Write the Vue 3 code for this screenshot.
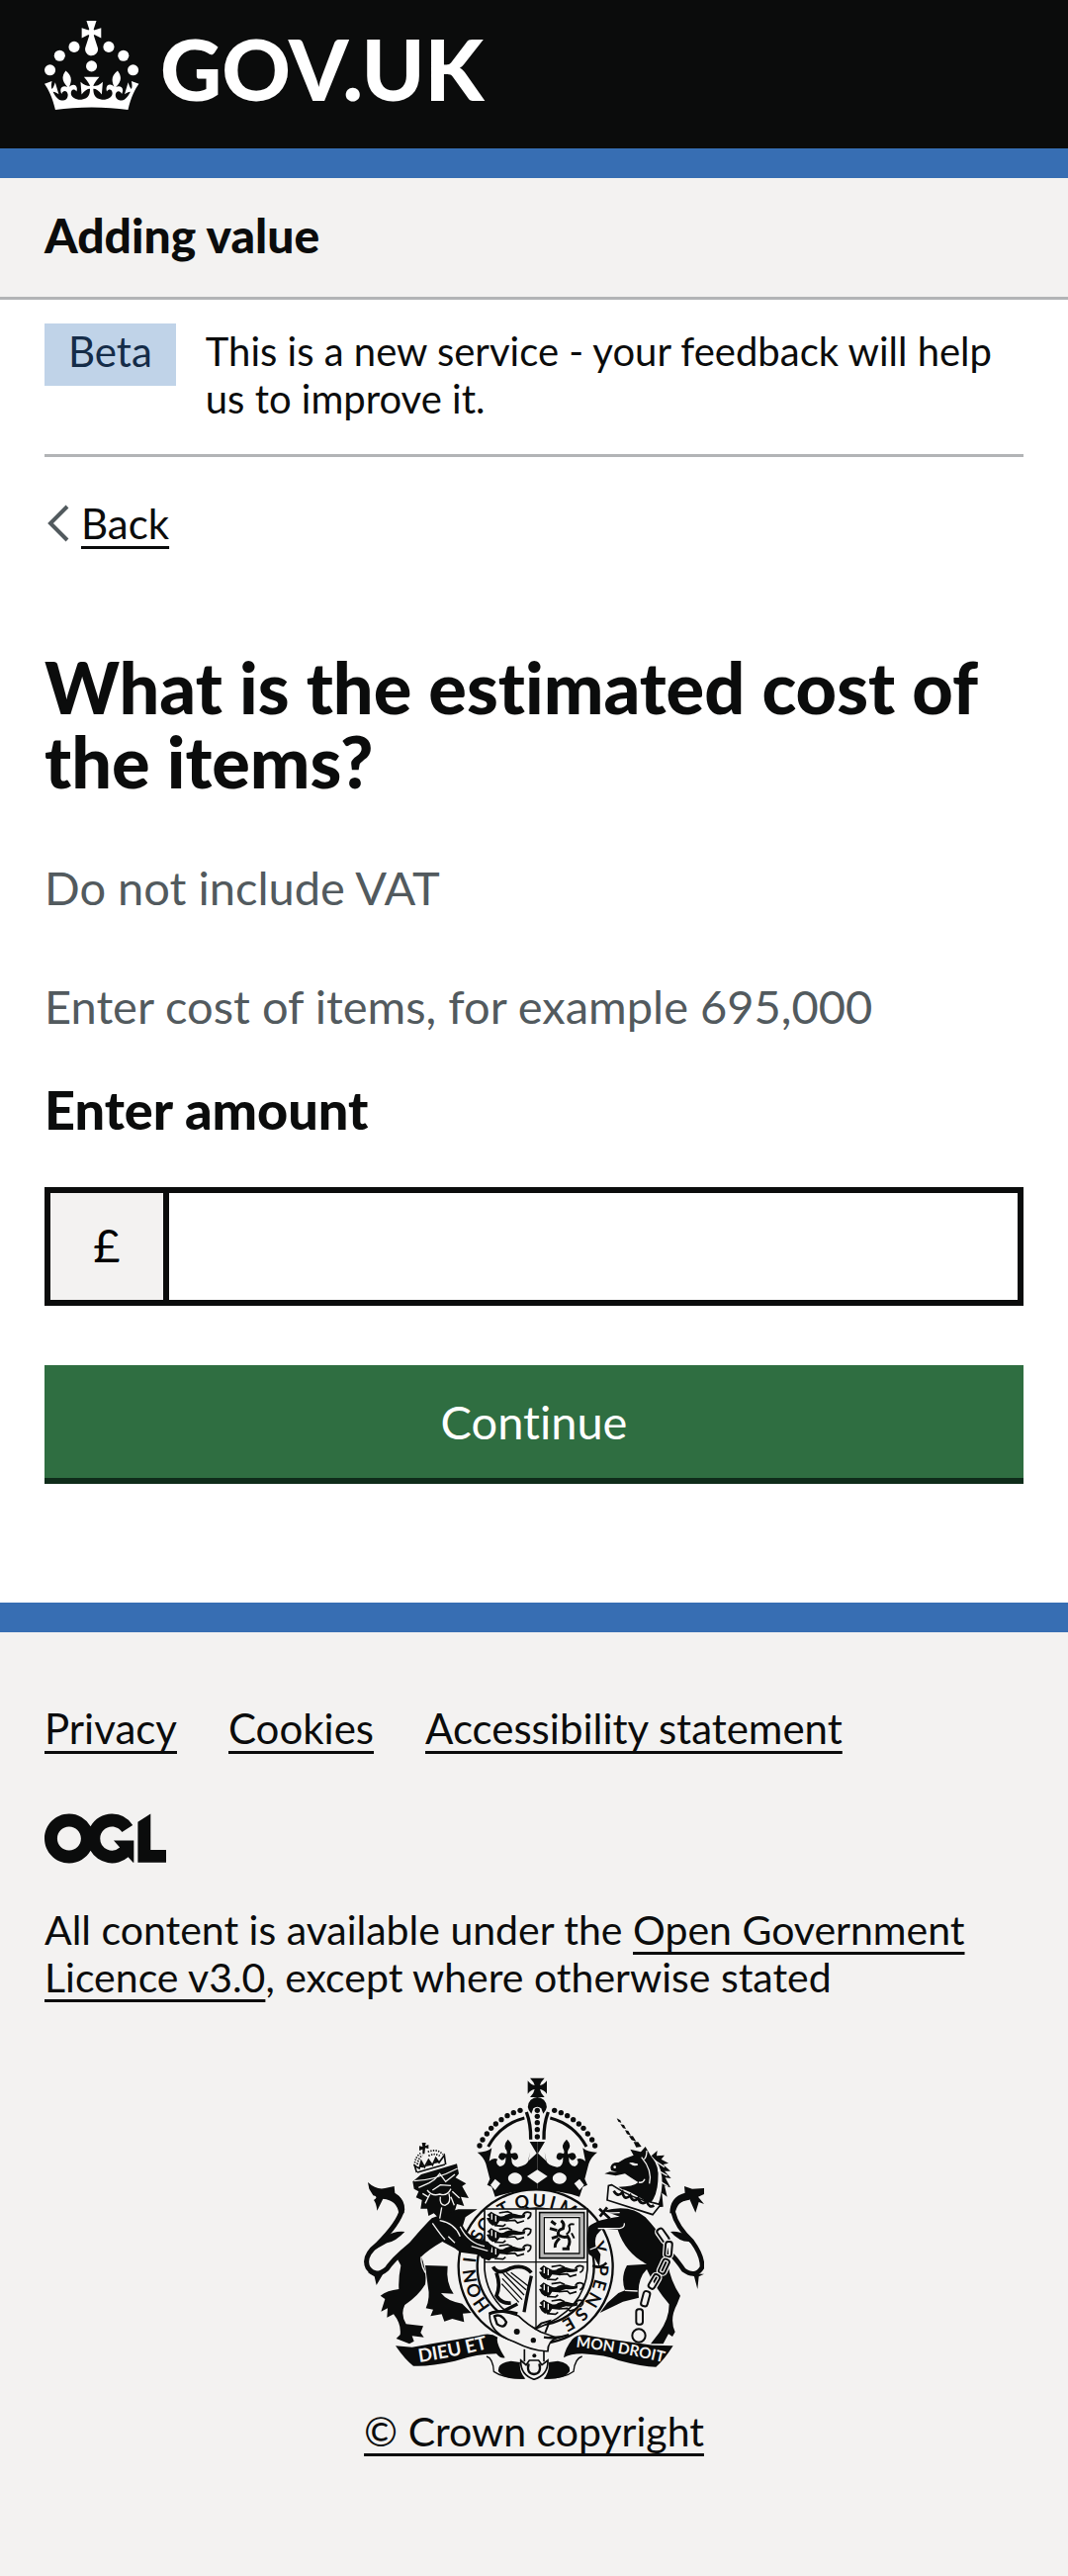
<script setup>
import { ref } from 'vue'

const amount = ref('')

const footerLinks = ['Privacy', 'Cookies', 'Accessibility statement']

// Pearls along the left half of the crown's arch, mirrored for the right half
const pearls = [
  [405, 265], [414, 247], [427, 229], [440, 212], [454, 199],
  [471, 186], [489, 174], [508, 165], [528, 158],
]

// Garter motto: letter and its angle clockwise from the top of the ring
const motto = [
  ['H', -125], ['O', -111], ['N', -98], ['I', -84], ['S', -62], ['O', -50],
  ['T', -29], ['Q', -12], ['U', 3], ['I', 15], ['M', 29],
  ['Y', 73], ['P', 93], ['E', 106], ['N', 120], ['S', 136], ['E', 150],
]

// Chain links: centre x, centre y, rotation
const chain = [
  [962, 538, -35], [978, 580, 5], [964, 632, 25], [934, 678, 30], [908, 730, 15], [890, 785, 0],
]

const passants = [
  [424, 465], [424, 515], [424, 565], [583, 628], [583, 680], [583, 732],
]
</script>

<template>
  <div class="page">
    <header>
      <div class="masthead">
        <a class="logo" href="#" aria-label="GOV.UK">
          <svg class="logo-crown" viewBox="0 0 64 60" aria-hidden="true">
            <circle cx="20" cy="17.6" r="3.7" />
            <circle cx="10.2" cy="23.5" r="3.7" />
            <circle cx="3.7" cy="33.2" r="3.7" />
            <circle cx="31.7" cy="30.6" r="3.7" />
            <circle cx="43.3" cy="17.6" r="3.7" />
            <circle cx="53.2" cy="23.5" r="3.7" />
            <circle cx="59.7" cy="33.2" r="3.7" />
            <path d="M33.1,9.8c.2-.1.3-.3.5-.5l4.6,2.4v-6.8l-4.6,1.5c-.1-.2-.3-.3-.5-.5l1.9-5.9h-6.7l1.9,5.9c-.2.1-.3.3-.5.5l-4.6-1.5v6.8l4.6-2.4c.1.2.3.3.5.5l-2.6,8c-.9,2.8,1.2,5.7,4.1,5.7h0c3,0,5.1-2.9,4.1-5.7l-2.6-8ZM37,37.9s-3.4,3.8-4.1,6.1c2.2,0,4.2-.5,6.4-2.8l-.7,8.5c-2-2.8-4.4-4.1-5.7-3.8.1,3.1.5,6.7,5.8,7.2,3.7.3,6.7-1.5,7-3.8.4-2.6-2-4.3-3.7-1.6-1.4-4.5,2.4-6.1,4.9-3.2-1.9-4.5-1.8-7.7,2.4-10.9,3,4,2.6,7.3-1.2,11.1,2.4-1.3,6.2,0,4,4.6-1.2-2.8-3.7-2.2-4.2.2-.3,1.7.7,3.7,3,4.2,1.9.3,4.7-.9,7-5.9-1.3,0-2.4.7-3.9,1.7l2.4-8c.6,2.3,1.4,3.7,2.2,4.5.6-1.6.5-2.8,0-5.3l5,1.8c-2.6,3.6-5.2,8.7-7.3,17.5-7.4-1.1-15.7-1.7-24.5-1.7h0c-8.8,0-17.1.6-24.5,1.7-2.1-8.9-4.7-13.9-7.3-17.5l5-1.8c-.5,2.5-.6,3.7,0,5.3.8-.8,1.6-2.3,2.2-4.5l2.4,8c-1.5-1-2.6-1.7-3.9-1.7,2.3,5,5.2,6.2,7,5.9,2.3-.4,3.3-2.4,3-4.2-.5-2.4-3-3.1-4.2-.2-2.2-4.6,1.6-6,4-4.6-3.7-3.7-4.2-7.1-1.2-11.1,4.2,3.2,4.3,6.4,2.4,10.9,2.5-2.8,6.3-1.3,4.9,3.2-1.8-2.7-4.1-1-3.7,1.6.3,2.3,3.3,4.1,7,3.8,5.4-.5,5.7-4.2,5.8-7.2-1.3-.2-3.7,1-5.7,3.8l-.7-8.5c2.2,2.3,4.2,2.7,6.4,2.8-.7-2.3-4.1-6.1-4.1-6.1h10.6,0Z" />
          </svg>
          <span class="logo-name">GOV.UK</span>
        </a>
      </div>
      <div class="service">Adding value</div>
    </header>

    <div class="container">
      <div class="phase">
        <strong class="tag">Beta</strong>
        <span class="phase-text">This is a new service - your feedback will help us to improve it.</span>
      </div>

      <a class="back" href="#">
        <svg class="chevron" viewBox="0 0 22 38" aria-hidden="true"><path d="M20 2 3 19l17 17" /></svg>
        <span class="underlined">Back</span>
      </a>

      <main>
        <form @submit.prevent>
          <h1>What is the estimated cost of the items?</h1>
          <p class="hint">Do not include VAT</p>
          <p id="amount-hint" class="hint">Enter cost of items, for example 695,000</p>
          <label for="amount">Enter amount</label>
          <div class="field">
            <span class="prefix" aria-hidden="true">£</span>
            <input id="amount" v-model="amount" type="text" inputmode="decimal" aria-describedby="amount-hint" />
          </div>
          <button type="submit">Continue</button>
        </form>
      </main>
    </div>

    <footer>
      <ul class="footer-links">
        <li v-for="link in footerLinks" :key="link"><a class="underlined" href="#">{{ link }}</a></li>
      </ul>
      <svg class="ogl" viewBox="0 0 483.2 195.7" aria-hidden="true">
        <path d="M421.5 142.8V.1l-50.7 32.3v161.1h112.4v-50.7zm-122.3-9.6A47.12 47.12 0 0 1 221 97.8c0-26 21.1-47.1 47.1-47.1 16.7 0 31.4 8.7 39.7 21.8l42.7-27.2A97.63 97.63 0 0 0 268.1 0c-36.5 0-68.3 20.1-85.1 49.7A98 98 0 0 0 97.8 0C43.9 0 0 43.9 0 97.8s43.9 97.8 97.8 97.8c36.5 0 68.3-20.1 85.1-49.7a97.76 97.76 0 0 0 149.6 25.4l19.4 22.2h3v-87.8h-80l24.3 27.5zM97.8 145c-26 0-47.1-21.1-47.1-47.1s21.1-47.1 47.1-47.1 47.1 21.1 47.1 47.1S123.8 145 97.8 145" />
      </svg>
      <p class="licence">
        All content is available under the
        <a class="underlined" href="#">Open Government Licence v3.0</a>, except where otherwise stated
      </p>

      <a class="copyright" href="#">
        <svg class="crest" viewBox="54 58 1032 918" aria-hidden="true">
          <defs>
            <g id="crown-half">
              <circle v-for="[x, y] in pearls" :key="x" :cx="x" :cy="y" r="8" />
              <path class="line" stroke-width="9" d="M431 268Q468 200 541 181" />
              <path class="line" stroke-width="10" d="M547 163Q561 200 560 246" />
              <path d="M398 285Q425 286 442 272L434 312Q446 300 460 306Q450 318 466 328Q486 326 484 300Q474 318 462 300Q466 280 484 290Q490 292 487 280Q474 264 491 246Q510 264 499 280Q497 292 504 288Q522 282 522 302Q512 316 502 300Q500 328 520 330Q550 326 554 308L558 284L552 312L578 288L557 253H580V400Q510 400 452 420L442 390L428 384L436 366L424 320Q418 300 398 285Z" />
              <path class="paper" d="M452 366L468 380L452 400L438 384ZM512 347a21 17 0 1 0 1 0Z" />
            </g>
            <path id="scroll-left" d="M222 922Q330 906 446 876" />
            <path id="scroll-right" d="M697 876Q830 890 970 924" />
            <g id="passant">
              <path d="M4 10L16 0L26 6L38 12Q50 18 60 10Q76 2 92 8Q108 14 120 8L118 18Q100 22 84 20Q70 22 62 30L42 28L34 40L20 42L10 34L2 20L12 18Z" />
              <path class="line" stroke-width="5" d="M40 4L66 0L80 6M62 28L88 26L96 34L116 28M26 42L52 44L60 38M112 10Q120 -4 136 4Q138 16 126 22" />
              <path class="etch" stroke-width="3" d="M18 6V24M30 12V30" />
            </g>
          </defs>

          <!-- Garter -->
          <circle class="ring" cx="575" cy="632" r="234" />
          <circle class="ring" cx="575" cy="632" r="177" />
          <text
            v-for="([letter, angle], i) in motto"
            :key="i"
            class="motto"
            x="575"
            y="450"
            :transform="`rotate(${angle} 575 632)`"
          >{{ letter }}</text>

          <!-- Shield -->
          <path class="shield" d="M420 457H732V640Q724 764 576 820Q430 764 420 640Z" />
          <path class="line" stroke-width="4" d="M576 457V820M420 618H732" />
          <use v-for="[x, y] in passants" :key="`${x}-${y}`" href="#passant" :x="x" :y="y" />
          <path class="line" stroke-width="5" d="M587 468H722V606H587Z" />
          <path class="line" stroke-width="8" stroke-opacity=".25" d="M594 475H715V599H594Z" />
          <path class="line" stroke-width="4" d="M601 483H708V592H601Z" />
          <path class="line" stroke-width="9" d="M622 494L636 504M652 492Q664 500 658 516Q640 520 644 536Q660 546 672 540Q684 556 672 574M618 516L640 522M624 546L642 540M648 546Q632 560 634 574M656 578H678" />
          <path class="line" stroke-width="6" d="M668 534Q684 524 676 508Q680 500 692 504M684 530L692 546" />
          <path class="line" stroke-width="11" d="M446 632Q460 660 500 636Q540 624 562 650M456 650Q470 690 456 720Q470 745 500 742" />
          <path class="line" stroke-width="10" d="M562 660Q548 720 540 770M480 765L520 745" />
          <path class="line" stroke-width="4" d="M476 652L540 718M486 650L546 702M500 650L552 690M474 668L534 732M472 684L524 740" />

          <!-- Main crown -->
          <path d="M558 60H602Q590 72 588 82Q600 80 609 68V108Q600 96 588 94Q590 106 602 118H558Q570 106 572 94Q560 96 551 108V68Q560 80 572 82Q570 72 558 60Z" />
          <path d="M562 168Q542 146 560 126Q580 110 600 126Q618 146 598 168L592 152Q580 142 568 152Z" />
          <circle v-for="y in [158, 176, 195, 216, 238]" :key="y" cx="580" :cy="y" r="8" />
          <use href="#crown-half" />
          <use href="#crown-half" transform="translate(1160 0) scale(-1 1)" />
          <path class="paper" d="M580 338L611 358L580 380L549 358Z" />

          <!-- Lion -->
          <path class="line" stroke-width="15" d="M110 418Q170 410 170 458Q160 500 95 565Q50 600 66 635Q90 668 124 638Q150 600 220 548" />
          <path d="M66 376Q92 400 118 394L146 388L148 408Q178 424 176 470L160 470Q154 430 112 426L94 462Q92 440 84 430Q100 420 82 416L70 396ZM178 526Q120 520 84 582L124 560Q150 556 178 526ZM126 634L112 654L92 688L86 662L66 650Q100 650 126 634Z" />
          <path d="M260 485Q222 522 154 606L166 628Q158 668 160 700Q124 704 104 720L118 730L106 768L126 758L124 786L144 776Q168 806 164 838L152 850L192 866L206 858L200 842L236 846L226 832L234 812L182 806Q164 776 178 748Q218 722 240 686Q246 646 228 602Q250 580 292 556L330 576L346 588L402 596L412 606L434 614L446 602L436 588L444 570L430 556L388 544Q366 530 354 508L362 482L398 458H340L300 470Z" />
          <path d="M240 628L308 630Q302 680 326 714L288 712Q306 736 352 744L380 772L354 774L358 800L322 790L298 798L290 776L256 782L264 762L242 758Q256 726 248 690Z" />
          <path d="M202 374L228 352L336 320L342 350L332 362L364 380L352 388L372 424L348 420L358 448L336 442L330 462Q310 470 286 490L266 470L250 478L246 456L226 456L230 430L212 422L220 404L206 396Z" />
          <path class="etch" d="M206 372Q270 370 338 334M220 392L252 378L268 368L284 350L302 374L330 352M262 400L286 384L318 386M254 412L240 440M246 400Q262 420 284 412Q306 420 318 396M286 420Q282 444 300 446Q320 440 312 410M322 404L344 424M318 420L328 446M290 452L284 486M232 410L248 420" />
          <path class="etch" d="M262 500Q290 540 300 550M284 492Q330 500 346 540M310 540L330 560M346 510Q370 560 420 570M228 602Q226 626 240 650M380 570L430 584" />
          <path class="line" stroke-width="5" d="M216 346L300 322M214 346L208 326L222 334L228 312L238 330L250 308L262 324L272 302L282 316L298 294L302 322" />
          <path d="M222 330L228 312L236 332ZM242 328L251 306L260 324ZM266 320L273 300L281 316ZM230 256H242L240 266L250 262V274L240 272L238 290H232L232 276L222 280V266L232 268Z" />
          <path class="pearl-line" d="M208 326Q208 300 226 288M248 284Q276 272 294 292M216 322Q220 300 232 294M250 296Q270 286 284 296" />

          <!-- Unicorn -->
          <path d="M821 182L832 188L835 196L826 192ZM832 200L843 202L849 214L840 212ZM846 218L856 220L864 234L852 230ZM858 236L870 236L880 252L866 248ZM872 254L886 254L896 268L880 270Z" />
          <path d="M802 330Q806 314 826 316Q850 300 872 294L862 276L894 284L908 268L924 296Q952 326 946 372Q944 414 922 442L900 428Q860 402 836 396L826 390Q872 390 886 376Q860 360 846 350L818 356L784 350L800 344L822 346L804 340Z" />
          <path d="M926 296L944 280L942 296L966 294L956 306L978 318L962 322L984 342L966 342L986 364L968 362L984 392L966 386L974 420L958 408L962 450L944 452Q962 400 958 360Q954 320 926 296Z" />
          <path class="etch" d="M860 318L884 322M912 280Q912 300 904 306M896 300Q930 340 920 380M888 376Q900 380 906 366M936 310L966 330M946 340L974 356M950 372L976 388" />
          <path class="paper" d="M866 316a10 6 0 1 0 20 6Z" />
          <circle class="paper" cx="815" cy="330" r="4" />
          <path class="collar" d="M806 384L796 386L792 430L930 474L954 444L940 440Q870 428 806 384Z" />
          <path class="line" stroke-width="8" d="M812 402Q824 424 838 406Q844 434 862 416Q870 440 886 424Q894 448 912 434Q920 456 934 446" />
          <path d="M780 462Q862 440 908 482Q936 512 968 556Q984 584 976 622Q984 676 1014 720L1004 746Q980 790 998 830L990 844L978 836L962 866L924 866L950 832Q980 790 980 746Q940 700 912 640Q882 670 888 726L840 738L770 772L792 742L826 712L846 704Q832 664 852 628L912 624Q848 592 824 520L780 516Q748 536 758 572L772 594L768 632L754 606L736 594Q726 548 736 510Q760 488 830 480Z" />
          <path class="etch" d="M764 516L830 516Q846 512 844 500M770 470L830 468M846 704L884 706M740 580L760 572" />
          <path class="line" stroke-width="8" d="M770 480L792 452M768 456L800 486M748 628Q770 640 790 620" />
          <path class="line" stroke-width="14" d="M1040 422Q990 430 992 466Q1002 510 1050 556Q1082 600 1080 634Q1060 668 1024 642Q1004 612 984 592" />
          <path d="M1086 394L1050 396L1026 388L1028 408Q982 420 982 470H998Q1006 430 1042 428L1060 468L1070 436L1086 442L1068 420L1086 412ZM984 526Q1030 520 1070 576L1040 556Q1010 556 984 526ZM1030 642L1056 662L1066 700L1070 662L1086 654Q1060 656 1030 642Z" />
          <g v-for="[x, y, turn] in chain" :key="y" :transform="`translate(${x} ${y}) rotate(${turn})`">
            <rect class="link-edge" x="-10" y="-24" width="20" height="46" rx="8" />
            <rect class="link-core" x="-10" y="-24" width="20" height="46" rx="8" />
          </g>
          <circle class="line" stroke-width="6" cx="888" cy="841" r="20" />

          <!-- Scroll, belt and pendant -->
          <path class="line" stroke-width="4" d="M426 904Q446 910 448 950Q480 972 540 970M716 904Q694 910 690 950Q660 972 602 970" />
          <path d="M462 950Q458 924 500 918L528 922Q524 950 544 972Q480 976 462 950ZM678 950Q682 924 642 918L614 922Q618 950 600 972Q660 976 678 950Z" />
          <path d="M150 872L200 876Q320 856 400 842Q436 830 460 846Q452 860 482 908Q468 912 456 896Q400 896 330 918Q250 936 204 933Q180 916 150 872Z" />
          <path d="M992 872L930 870Q820 856 740 842Q706 832 686 852Q664 880 660 908Q680 896 716 896Q790 900 826 916Q900 936 940 936Q964 916 992 872Z" />
          <text class="scroll-text"><textPath href="#scroll-left">DIEU ET</textPath></text>
          <text class="scroll-text small"><textPath href="#scroll-right">MON DROIT</textPath></text>
          <path class="belt" d="M436 772Q470 760 524 782Q550 808 590 830L640 848Q612 856 612 888Q570 890 510 860Q430 830 436 772Z" />
          <path class="line" stroke-width="9" d="M434 776Q460 760 520 774" />
          <path class="line" stroke-width="7" d="M450 782Q470 772 486 800Q480 822 458 806ZM600 846Q640 852 676 838" />
          <path class="line" stroke-width="6" d="M572 822L592 804L618 796L604 832" />
          <circle cx="518" cy="829" r="9" />
          <circle cx="568" cy="855" r="8" />
          <path class="belt" d="M541 882V920M600 888V920" />
          <path class="belt" d="M530 916L546 930L556 916H584L594 930L612 916Q614 960 570 974Q528 960 530 916Z" />
          <path class="line" stroke-width="7" d="M554 926Q546 956 570 958Q594 956 586 926" />
          <circle cx="571" cy="902" r="6" />
        </svg>
        <span class="underlined">© Crown copyright</span>
      </a>
    </footer>
  </div>
</template>

<style>
body {
  margin: 0;
  background: #fff;
}
</style>

<style scoped>
.page {
  color: #0b0c0c;
  font-family: Lato, "Noto Sans", sans-serif;
  font-size: 42px;
  font-variant-ligatures: none;
  line-height: 48px;
}

a {
  color: inherit;
  text-decoration: none;
}

.underlined {
  text-decoration: underline;
  text-decoration-thickness: 3px;
  text-decoration-skip-ink: none;
  text-underline-offset: 7px;
}

.masthead {
  padding: 21px 45px 39px;
  border-bottom: 30px solid #376eb3;
  background: #0b0c0c;
}

.logo {
  display: flex;
  align-items: flex-start;
  gap: 21px;
  height: 90px;
  color: #fff;
}

.logo-crown {
  width: 96px;
  height: 90px;
  fill: currentColor;
}

.logo-name {
  font-size: 86px;
  font-weight: 900;
  line-height: 96px;
}

.service {
  padding: 28px 45px 32px;
  border-bottom: 3px solid #b2b4b6;
  background: #f3f2f1;
  font-size: 48px;
  font-weight: 900;
  line-height: 60px;
}

.container {
  padding: 0 45px;
}

.phase {
  display: flex;
  align-items: flex-start;
  gap: 30px;
  padding: 24px 0 32px;
  border-bottom: 3px solid #b2b4b6;
}

.phase-text {
  padding-top: 4px;
  font-size: 40px;
}

.tag {
  padding: 4px 24px 11px;
  background: #c0d3e8;
  color: #152c48;
  font-weight: 400;
}

.back {
  display: flex;
  align-items: center;
  gap: 12px;
  width: fit-content;
  margin: 43px 0 0 3px;
}

.chevron {
  width: 22px;
  height: 38px;
  fill: none;
  stroke: #525a5e;
  stroke-width: 4;
}

main {
  padding: 104px 0 120px;
}

h1 {
  margin: 0 0 60px;
  font-size: 72px;
  font-weight: 900;
  line-height: 75px;
}

.hint {
  margin: 0 0 60px;
  color: #525a5e;
  font-size: 47px;
  line-height: 60px;
}

#amount-hint {
  margin-bottom: 45px;
}

label {
  display: block;
  margin-bottom: 48px;
  font-size: 54px;
  font-weight: 900;
  line-height: 60px;
}

.field {
  display: flex;
  height: 108px;
  margin-bottom: 60px;
  border: 6px solid #0b0c0c;
}

.prefix {
  width: 114px;
  border-right: 6px solid #0b0c0c;
  background: #f3f2f1;
  color: #000;
  font-size: 47px;
  line-height: 104px;
  text-align: center;
}

input {
  flex: 1;
  min-width: 0;
  padding: 0 15px;
  border: 0;
  outline: 0;
  background: #fff;
  color: inherit;
  font: inherit;
  font-size: 47px;
}

button {
  display: block;
  width: 100%;
  padding: 27px 30px;
  border: 0;
  border-bottom: 6px solid #0f2c1a;
  background: #2f6e41;
  color: #fff;
  font: inherit;
  font-size: 47px;
  line-height: 60px;
}

footer {
  padding: 73px 45px 122px;
  border-top: 30px solid #376eb3;
  background: #f3f2f1;
}

.footer-links {
  display: flex;
  flex-wrap: wrap;
  gap: 0 52px;
  margin: 0 0 62px;
  padding: 0;
  list-style: none;
}

.ogl {
  display: block;
  width: 123px;
  height: 51px;
  margin-bottom: 43px;
  fill: currentColor;
}

.licence {
  margin: 0 0 77px;
  font-size: 41px;
}

.copyright {
  display: flex;
  flex-direction: column;
  align-items: center;
  gap: 28px;
  font-size: 41px;
}

.crest {
  width: 344px;
  height: 306px;
  fill: #0b0c0c;
}

.line,
.ring,
.pearl-line {
  fill: none;
  stroke: #0b0c0c;
}

.paper {
  fill: #f3f2f1;
}

.etch {
  fill: none;
  stroke: #f3f2f1;
  stroke-width: 4;
}

.ring {
  fill: #f3f2f1;
  stroke-width: 7;
}

.shield,
.collar,
.belt {
  fill: #f3f2f1;
  stroke: #0b0c0c;
  stroke-width: 5;
}

.pearl-line {
  stroke-width: 5;
  stroke-dasharray: 4 4;
}

.link-edge,
.link-core {
  fill: none;
  stroke: #f3f2f1;
  stroke-width: 14;
}

.link-core {
  stroke: #0b0c0c;
  stroke-width: 6;
}

.motto {
  font-size: 54px;
  font-weight: 700;
  text-anchor: middle;
}

.scroll-text {
  fill: #f3f2f1;
  font-size: 56px;
  font-weight: 700;
}

.scroll-text.small {
  font-size: 46px;
}
</style>
